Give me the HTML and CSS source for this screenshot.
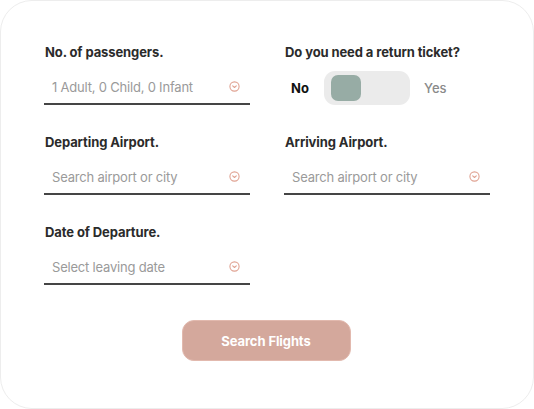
FILE: index.html
```html
<!DOCTYPE html>
<html>
<head>
<meta charset="utf-8">
<link rel="stylesheet" href="styles.css">
</head>
<body>
<div class="card">
  <div class="grid">
    <div class="field">
      <div class="label">No. of passengers.</div>
      <div class="select">
        <span class="placeholder">1 Adult, 0 Child, 0 Infant</span>
        <svg class="chev" width="11" height="11" viewBox="0 0 11 11"><circle cx="5.5" cy="5.5" r="4.6" fill="none" stroke="#e0a393" stroke-width="1.1"/><path d="M3.7 4.8 L5.5 6.5 L7.3 4.8" fill="none" stroke="#e0a393" stroke-width="1.1" stroke-linecap="round" stroke-linejoin="round"/></svg>
      </div>
    </div>
    <div class="field">
      <div class="label">Do you need a return ticket?</div>
      <div class="toggle-row">
        <span class="no">No</span>
        <div class="toggle"><div class="knob"></div></div>
        <span class="yes">Yes</span>
      </div>
    </div>
    <div class="field">
      <div class="label">Departing Airport.</div>
      <div class="select">
        <span class="placeholder">Search airport or city</span>
        <svg class="chev" width="11" height="11" viewBox="0 0 11 11"><circle cx="5.5" cy="5.5" r="4.6" fill="none" stroke="#e0a393" stroke-width="1.1"/><path d="M3.7 4.8 L5.5 6.5 L7.3 4.8" fill="none" stroke="#e0a393" stroke-width="1.1" stroke-linecap="round" stroke-linejoin="round"/></svg>
      </div>
    </div>
    <div class="field">
      <div class="label">Arriving Airport.</div>
      <div class="select">
        <span class="placeholder">Search airport or city</span>
        <svg class="chev" width="11" height="11" viewBox="0 0 11 11"><circle cx="5.5" cy="5.5" r="4.6" fill="none" stroke="#e0a393" stroke-width="1.1"/><path d="M3.7 4.8 L5.5 6.5 L7.3 4.8" fill="none" stroke="#e0a393" stroke-width="1.1" stroke-linecap="round" stroke-linejoin="round"/></svg>
      </div>
    </div>
    <div class="field">
      <div class="label">Date of Departure.</div>
      <div class="select">
        <span class="placeholder">Select leaving date</span>
        <svg class="chev" width="11" height="11" viewBox="0 0 11 11"><circle cx="5.5" cy="5.5" r="4.6" fill="none" stroke="#e0a393" stroke-width="1.1"/><path d="M3.7 4.8 L5.5 6.5 L7.3 4.8" fill="none" stroke="#e0a393" stroke-width="1.1" stroke-linecap="round" stroke-linejoin="round"/></svg>
      </div>
    </div>
  </div>
  <div class="actions">
    <button class="search">Search Flights</button>
  </div>
</div>
</body>
</html>
```
FILE: styles.css
```css
html, body {
  margin: 0;
  padding: 0;
  background: #ffffff;
}
body {
  font-family: "Inter", "Liberation Sans", sans-serif;
}
.card {
  box-sizing: border-box;
  width: 534px;
  height: 409px;
  border: 1px solid #ededed;
  border-radius: 32px;
  background: #fff;
  padding: 43px 44px 0 43px;
}
.grid {
  display: grid;
  grid-template-columns: 206px 206px;
  column-gap: 34px;
  row-gap: 29px;
}
.field {
  display: flex;
  flex-direction: column;
  gap: 10px;
}
.label {
  font-size: 13px;
  line-height: 16px;
  font-weight: 700;
  color: #2b2b2b;
  letter-spacing: -0.1px;
  padding-left: 1px;
}
.select {
  box-sizing: border-box;
  height: 35px;
  border-bottom: 2px solid #454545;
  display: flex;
  align-items: center;
  justify-content: space-between;
  padding: 0 10px 0 8px;
}
.placeholder {
  font-size: 13px;
  color: #9a9a9a;
  letter-spacing: -0.2px;
}
.chev {
  display: block;
}
.toggle-row {
  display: flex;
  align-items: center;
  height: 35px;
}
.no {
  font-size: 13px;
  font-weight: 700;
  color: #111;
  margin-left: 7px;
  width: 33px;
}
.toggle {
  box-sizing: border-box;
  width: 86px;
  height: 34px;
  border-radius: 11px;
  background: #ebebeb;
  padding: 4px 7px;
}
.knob {
  width: 30px;
  height: 26px;
  border-radius: 7px;
  background: #97aca5;
}
.yes {
  font-size: 13px;
  font-weight: 500;
  color: #8a8a8a;
  margin-left: 14px;
}
.actions {
  display: flex;
  justify-content: center;
  margin-top: 35px;
  padding-right: 1px;
}
.search {
  width: 169px;
  height: 41px;
  border: 1px solid #e2b9ae;
  border-radius: 12px;
  background: #d4a89c;
  color: #fff;
  font-family: "Inter", "Liberation Sans", sans-serif;
  font-size: 13px;
  font-weight: 700;
  letter-spacing: -0.1px;
}
```
